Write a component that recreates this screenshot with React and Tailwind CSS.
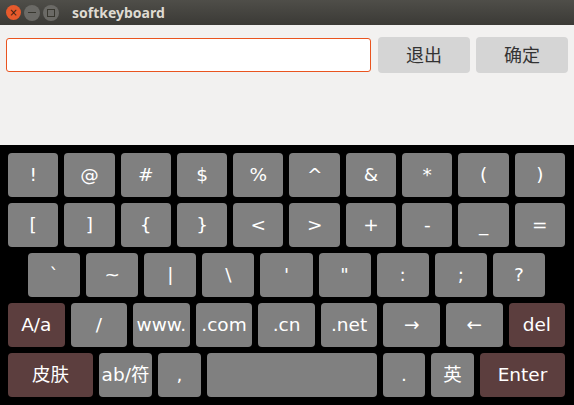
import React from "react";

const row1 = ["!", "@", "#", "$", "%", "^", "&", "*", "(", ")"];
const row2 = ["[", "]", "{", "}", "<", ">", "+", "-", "_", "="];
const row3 = ["`", "~", "|", "\\", "'", "\"", ":", ";", "?"];
const row4 = ["A/a", "/", "www.", ".com", ".cn", ".net", "→", "←", "del"];
const row5 = [
  { label: "皮肤", w: "w-[85px]", dark: true },
  { label: "ab/符", w: "w-[53px]" },
  { label: ",", w: "w-[43px]" },
  { label: "", w: "w-[170px]" },
  { label: ".", w: "w-[42px]" },
  { label: "英", w: "w-[43px]" },
  { label: "Enter", w: "w-[85px]", dark: true },
];

const dark = ["A/a", "del"];

function Key({ label, className = "", isDark }) {
  return (
    <button
      className={`h-[44px] rounded-[4px] flex items-center justify-center text-white text-[18.5px] leading-none whitespace-nowrap overflow-hidden ${
        isDark ? "bg-[#5c3e3e]" : "bg-[#808080]"
      } ${className}`}
    >
      {label}
    </button>
  );
}

export default function App() {
  return (
    <div
      className="w-[574px] h-[405px] flex flex-col overflow-hidden"
      style={{ fontFamily: '"DejaVu Sans", "Noto Sans CJK SC", sans-serif' }}
    >
      {/* Title bar */}
      <div className="h-[25px] bg-gradient-to-b from-[#4f4e49] to-[#3b3a36] flex items-center px-[6px] gap-[3px]">
        <span className="w-[15px] h-[15px] rounded-full bg-[#e75a2c] flex items-center justify-center text-[#3a1a0e] text-[10px] leading-none">
          ×
        </span>
        <span className="w-[16px] h-[16px] rounded-full bg-[#6b6a66] flex items-center justify-center">
          <span className="w-[8px] h-[1.5px] bg-[#38372f]" />
        </span>
        <span className="w-[16px] h-[16px] rounded-full bg-[#6b6a66] flex items-center justify-center">
          <span className="w-[8px] h-[8px] border border-[#38372f]" />
        </span>
        <span
          className="ml-[10px] text-[14px] font-bold text-[#dfdbd2]"
          style={{ fontFamily: '"Noto Sans", "DejaVu Sans", sans-serif' }}
        >
          softkeyboard
        </span>
      </div>

      {/* Input area */}
      <div className="h-[120px] bg-[#f2f1f0] flex items-start pt-[12px] px-[6px]">
        <input className="mt-[1px] w-[365px] h-[34px] bg-white border border-[#e9541f] rounded-[3px] outline-none" />
        <button className="ml-[7px] w-[92px] h-[36px] rounded-[4px] bg-[#d5d5d5] text-[#333333] text-[18px]">
          退出
        </button>
        <button className="ml-[6px] w-[92px] h-[36px] rounded-[4px] bg-[#d5d5d5] text-[#333333] text-[18px]">
          确定
        </button>
      </div>

      {/* Keyboard */}
      <div className="flex-1 bg-black pt-[8px] flex flex-col gap-[6px]">
        <div className="flex gap-[6px] pl-[8px] pr-[9px]">
          {row1.map((k) => (
            <Key key={k} label={k} className="flex-1" />
          ))}
        </div>
        <div className="flex gap-[6px] pl-[8px] pr-[9px]">
          {row2.map((k) => (
            <Key key={k} label={k} className="flex-1" />
          ))}
        </div>
        <div className="flex gap-[6px] pl-[28px] pr-[29px]">
          {row3.map((k) => (
            <Key key={k} label={k} className="flex-1" />
          ))}
        </div>
        <div className="flex gap-[6px] pl-[8px] pr-[9px]">
          {row4.map((k) => (
            <Key key={k} label={k} className="flex-1" isDark={dark.includes(k)} />
          ))}
        </div>
        <div className="flex gap-[6px] pl-[8px] pr-[9px]">
          {row5.map((k, i) => (
            <Key key={i} label={k.label} className={k.w} isDark={k.dark} />
          ))}
        </div>
      </div>
    </div>
  );
}
